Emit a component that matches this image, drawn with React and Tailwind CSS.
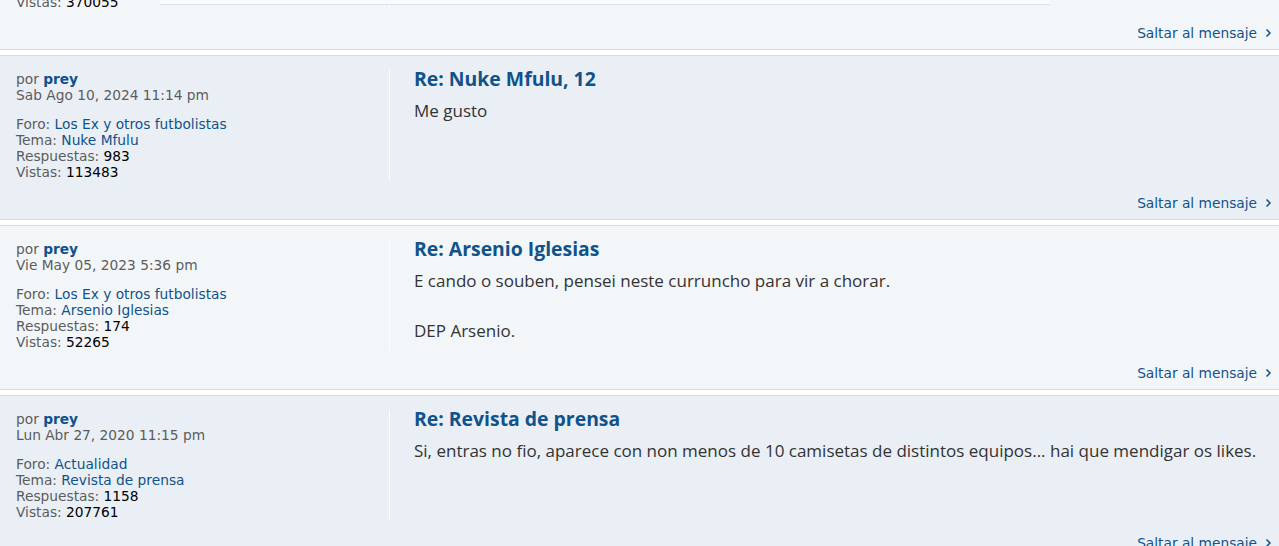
import React from "react";

const posts = [
  {
    date: "Mar Ene 14, 2025 9:02 pm",
    forum: "Los Ex y otros futbolistas",
    topic: "Nuke Mfulu",
    replies: "983",
    views: "370055",
    title: "Re: Nuke Mfulu",
    body: [""],
    bg: "bg-[#f3f6f9]",
  },
  {
    date: "Sab Ago 10, 2024 11:14 pm",
    forum: "Los Ex y otros futbolistas",
    topic: "Nuke Mfulu",
    replies: "983",
    views: "113483",
    title: "Re: Nuke Mfulu, 12",
    body: ["Me gusto"],
    bg: "bg-[#e9eff5]",
  },
  {
    date: "Vie May 05, 2023 5:36 pm",
    forum: "Los Ex y otros futbolistas",
    topic: "Arsenio Iglesias",
    replies: "174",
    views: "52265",
    title: "Re: Arsenio Iglesias",
    body: [
      "E cando o souben, pensei neste curruncho para vir a chorar.",
      "",
      "DEP Arsenio.",
    ],
    bg: "bg-[#f3f6f9]",
  },
  {
    date: "Lun Abr 27, 2020 11:15 pm",
    forum: "Actualidad",
    topic: "Revista de prensa",
    replies: "1158",
    views: "207761",
    title: "Re: Revista de prensa",
    body: [
      "Si, entras no fio, aparece con non menos de 10 camisetas de distintos equipos... hai que mendigar os likes.",
    ],
    bg: "bg-[#e9eff5]",
  },
];

function Chevron() {
  return (
    <svg width="7" height="10" viewBox="0 0 7 10" className="ml-[8px] inline-block">
      <polyline points="1.5,1.5 5,5 1.5,8.5" fill="none" stroke="#105289" strokeWidth="1.5" />
    </svg>
  );
}

function Post({ post, first }) {
  return (
    <div
      className={`${post.bg} border-y border-[#d3dce6] pl-4 pr-[7px] pt-[14px] pb-[8px] ${
        first ? "-mt-[115px]" : "mt-[5px]"
      }`}
    >
      <div className="flex items-start">
        {/* Post profile */}
        <div className="w-[374px] shrink-0 border-r border-white pt-px font-['DejaVu_Sans',sans-serif] text-[13.75px] leading-[16px] text-[#5c5c5c]">
          <div>
            por <a className="font-bold text-[#105289]">prey</a>
          </div>
          <div>{post.date}</div>
          <div className="mt-[13px]">
            Foro: <a className="text-[#105289]">{post.forum}</a>
          </div>
          <div>
            Tema: <a className="text-[#105289]">{post.topic}</a>
          </div>
          <div>
            Respuestas: <span className="text-black">{post.replies}</span>
          </div>
          <div>
            Vistas: <span className="text-black">{post.views}</span>
          </div>
        </div>

        {/* Post body */}
        <div className="pl-6 font-['Open_Sans',sans-serif]">
          <h3 className="text-[19.4px] font-bold leading-[18px] text-[#105289]">{post.title}</h3>
          <div className="mt-[10px] text-[17px] leading-[25px] text-[#333333]">
            {post.body.map((line, i) => (
              <div key={i}>{line || "\u00a0"}</div>
            ))}
          </div>
        </div>
      </div>

      <div className="mt-[15px] flex items-center justify-end font-['DejaVu_Sans',sans-serif] text-[13.75px] leading-[16px] text-[#105289]">
        Saltar al mensaje
        <Chevron />
      </div>
    </div>
  );
}

export default function App() {
  return (
    <div className="relative h-[546px] overflow-hidden bg-white">
      {posts.map((p, i) => (
        <Post key={i} post={p} first={i === 0} />
      ))}
      {/* edge of the sticky bar above */}
      <div className="absolute left-[160px] top-0 h-[5px] w-[890px] border-b border-[#dde2e8] bg-[#fafbfc]" />
    </div>
  );
}
